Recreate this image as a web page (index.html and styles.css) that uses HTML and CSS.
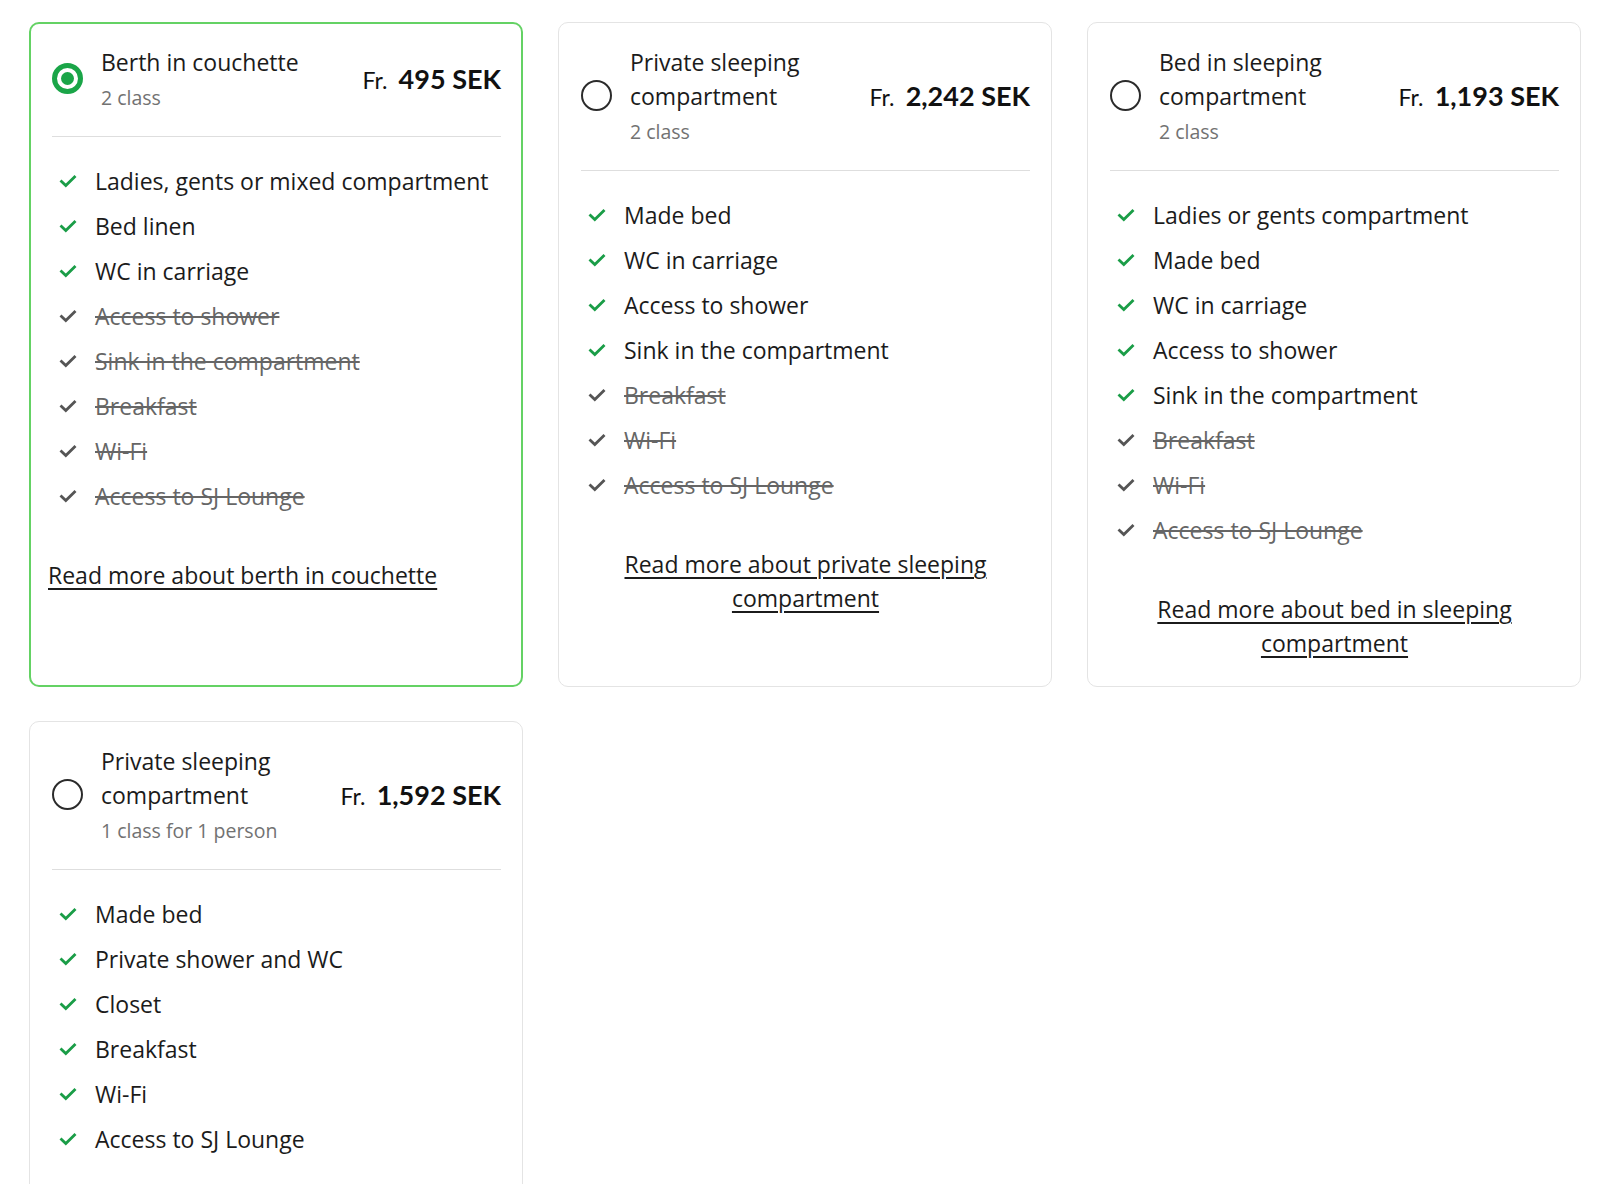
FILE: index.html
```html
<!DOCTYPE html>
<html lang="en">
<head>
<meta charset="utf-8">
<title>Sleeping options</title>
<link rel="stylesheet" href="styles.css">
</head>
<body>
<div class="options">

  <div class="card card--selected">
    <div class="card__head">
      <span class="radio radio--on"><span class="radio__dot"></span></span>
      <div class="card__title">
        <div class="title">Berth in couchette</div>
        <div class="sub">2 class</div>
      </div>
      <div class="price"><span class="price__from">Fr.</span> <span class="price__amount">495 SEK</span></div>
    </div>
    <ul class="features">
      <li class="feat"><svg class="check" viewBox="0 0 18 14"><path d="M1.5 6.5 L6.8 11.6 L16.5 2"/></svg><span>Ladies, gents or mixed compartment</span></li>
      <li class="feat"><svg class="check" viewBox="0 0 18 14"><path d="M1.5 6.5 L6.8 11.6 L16.5 2"/></svg><span>Bed linen</span></li>
      <li class="feat"><svg class="check" viewBox="0 0 18 14"><path d="M1.5 6.5 L6.8 11.6 L16.5 2"/></svg><span>WC in carriage</span></li>
      <li class="feat feat--off"><svg class="check" viewBox="0 0 18 14"><path d="M1.5 6.5 L6.8 11.6 L16.5 2"/></svg><span>Access to shower</span></li>
      <li class="feat feat--off"><svg class="check" viewBox="0 0 18 14"><path d="M1.5 6.5 L6.8 11.6 L16.5 2"/></svg><span>Sink in the compartment</span></li>
      <li class="feat feat--off"><svg class="check" viewBox="0 0 18 14"><path d="M1.5 6.5 L6.8 11.6 L16.5 2"/></svg><span>Breakfast</span></li>
      <li class="feat feat--off"><svg class="check" viewBox="0 0 18 14"><path d="M1.5 6.5 L6.8 11.6 L16.5 2"/></svg><span>Wi-Fi</span></li>
      <li class="feat feat--off"><svg class="check" viewBox="0 0 18 14"><path d="M1.5 6.5 L6.8 11.6 L16.5 2"/></svg><span>Access to SJ Lounge</span></li>
    </ul>
    <div class="more more--left"><a href="#">Read more about berth in couchette</a></div>
  </div>

  <div class="card">
    <div class="card__head">
      <span class="radio"></span>
      <div class="card__title">
        <div class="title">Private sleeping compartment</div>
        <div class="sub">2 class</div>
      </div>
      <div class="price"><span class="price__from">Fr.</span> <span class="price__amount">2,242 SEK</span></div>
    </div>
    <ul class="features">
      <li class="feat"><svg class="check" viewBox="0 0 18 14"><path d="M1.5 6.5 L6.8 11.6 L16.5 2"/></svg><span>Made bed</span></li>
      <li class="feat"><svg class="check" viewBox="0 0 18 14"><path d="M1.5 6.5 L6.8 11.6 L16.5 2"/></svg><span>WC in carriage</span></li>
      <li class="feat"><svg class="check" viewBox="0 0 18 14"><path d="M1.5 6.5 L6.8 11.6 L16.5 2"/></svg><span>Access to shower</span></li>
      <li class="feat"><svg class="check" viewBox="0 0 18 14"><path d="M1.5 6.5 L6.8 11.6 L16.5 2"/></svg><span>Sink in the compartment</span></li>
      <li class="feat feat--off"><svg class="check" viewBox="0 0 18 14"><path d="M1.5 6.5 L6.8 11.6 L16.5 2"/></svg><span>Breakfast</span></li>
      <li class="feat feat--off"><svg class="check" viewBox="0 0 18 14"><path d="M1.5 6.5 L6.8 11.6 L16.5 2"/></svg><span>Wi-Fi</span></li>
      <li class="feat feat--off"><svg class="check" viewBox="0 0 18 14"><path d="M1.5 6.5 L6.8 11.6 L16.5 2"/></svg><span>Access to SJ Lounge</span></li>
    </ul>
    <div class="more"><a href="#">Read more about private sleeping compartment</a></div>
  </div>

  <div class="card">
    <div class="card__head">
      <span class="radio"></span>
      <div class="card__title">
        <div class="title">Bed in sleeping compartment</div>
        <div class="sub">2 class</div>
      </div>
      <div class="price"><span class="price__from">Fr.</span> <span class="price__amount">1,193 SEK</span></div>
    </div>
    <ul class="features">
      <li class="feat"><svg class="check" viewBox="0 0 18 14"><path d="M1.5 6.5 L6.8 11.6 L16.5 2"/></svg><span>Ladies or gents compartment</span></li>
      <li class="feat"><svg class="check" viewBox="0 0 18 14"><path d="M1.5 6.5 L6.8 11.6 L16.5 2"/></svg><span>Made bed</span></li>
      <li class="feat"><svg class="check" viewBox="0 0 18 14"><path d="M1.5 6.5 L6.8 11.6 L16.5 2"/></svg><span>WC in carriage</span></li>
      <li class="feat"><svg class="check" viewBox="0 0 18 14"><path d="M1.5 6.5 L6.8 11.6 L16.5 2"/></svg><span>Access to shower</span></li>
      <li class="feat"><svg class="check" viewBox="0 0 18 14"><path d="M1.5 6.5 L6.8 11.6 L16.5 2"/></svg><span>Sink in the compartment</span></li>
      <li class="feat feat--off"><svg class="check" viewBox="0 0 18 14"><path d="M1.5 6.5 L6.8 11.6 L16.5 2"/></svg><span>Breakfast</span></li>
      <li class="feat feat--off"><svg class="check" viewBox="0 0 18 14"><path d="M1.5 6.5 L6.8 11.6 L16.5 2"/></svg><span>Wi-Fi</span></li>
      <li class="feat feat--off"><svg class="check" viewBox="0 0 18 14"><path d="M1.5 6.5 L6.8 11.6 L16.5 2"/></svg><span>Access to SJ Lounge</span></li>
    </ul>
    <div class="more"><a href="#">Read more about bed in sleeping compartment</a></div>
  </div>

  <div class="card">
    <div class="card__head">
      <span class="radio"></span>
      <div class="card__title">
        <div class="title">Private sleeping compartment</div>
        <div class="sub">1 class for 1 person</div>
      </div>
      <div class="price"><span class="price__from">Fr.</span> <span class="price__amount">1,592 SEK</span></div>
    </div>
    <ul class="features">
      <li class="feat"><svg class="check" viewBox="0 0 18 14"><path d="M1.5 6.5 L6.8 11.6 L16.5 2"/></svg><span>Made bed</span></li>
      <li class="feat"><svg class="check" viewBox="0 0 18 14"><path d="M1.5 6.5 L6.8 11.6 L16.5 2"/></svg><span>Private shower and WC</span></li>
      <li class="feat"><svg class="check" viewBox="0 0 18 14"><path d="M1.5 6.5 L6.8 11.6 L16.5 2"/></svg><span>Closet</span></li>
      <li class="feat"><svg class="check" viewBox="0 0 18 14"><path d="M1.5 6.5 L6.8 11.6 L16.5 2"/></svg><span>Breakfast</span></li>
      <li class="feat"><svg class="check" viewBox="0 0 18 14"><path d="M1.5 6.5 L6.8 11.6 L16.5 2"/></svg><span>Wi-Fi</span></li>
      <li class="feat"><svg class="check" viewBox="0 0 18 14"><path d="M1.5 6.5 L6.8 11.6 L16.5 2"/></svg><span>Access to SJ Lounge</span></li>
    </ul>
    <div class="more"><a href="#">Read more about private sleeping compartment</a></div>
  </div>

</div>
</body>
</html>
```

FILE: styles.css
```css
html, body {
  margin: 0;
  padding: 0;
  background: #ffffff;
}

body {
  font-family: "Open Sans", "Noto Sans", Arial, sans-serif;
  color: #1b1b1b;
}

.options {
  display: grid;
  grid-template-columns: repeat(3, 494px);
  column-gap: 35px;
  row-gap: 34px;
  padding: 22px 0 0 29px;
}

.card {
  border: 1px solid #e4e4e4;
  border-radius: 10px;
  padding: 22px 21px 26px 22px;
  background: #fff;
}

.card--selected {
  border: 2px solid #64d264;
  padding: 21px 20px 25px 21px;
}

.card__head {
  display: flex;
  align-items: center;
  padding-bottom: 24px;
  border-bottom: 1px solid #dedede;
}

.radio {
  flex: 0 0 auto;
  box-sizing: border-box;
  width: 31px;
  height: 31px;
  border: 2px solid #2b2b2b;
  border-radius: 50%;
  margin-right: 18px;
  display: flex;
  align-items: center;
  justify-content: center;
}

.radio--on {
  border: 5px solid #1aa548;
}

.radio__dot {
  width: 13px;
  height: 13px;
  border-radius: 50%;
  background: #1aa548;
}

.card__title {
  flex: 1 1 auto;
  min-width: 0;
  padding-right: 12px;
}

.title {
  font-size: 23px;
  line-height: 34px;
  color: #1b1b1b;
  max-width: 220px;
}

.sub {
  font-size: 19.5px;
  line-height: 28px;
  margin-top: 5px;
  color: #727272;
}

.price {
  flex: 0 0 auto;
  white-space: nowrap;
  color: #111;
  font-family: Lato, "Open Sans", Arial, sans-serif;
}

.price__from {
  font-size: 23px;
  margin-right: 7px;
}

.price__amount {
  font-size: 27px;
  font-weight: 700;
}

.features {
  list-style: none;
  margin: 21px 0 0;
  padding: 0;
}

.feat {
  display: flex;
  align-items: center;
  height: 45px;
  font-size: 23px;
  color: #1b1b1b;
}

.check {
  flex: 0 0 auto;
  width: 18px;
  height: 14px;
  margin-left: 7px;
  margin-right: 18px;
  fill: none;
  stroke: #1a9d47;
  stroke-width: 2.8;
  stroke-linejoin: miter;
}

.feat--off {
  color: #666;
}

.feat--off span {
  text-decoration: line-through;
  text-decoration-thickness: 1.5px;
}

.feat--off .check {
  stroke: #555;
}

.more {
  margin-top: 40px;
  text-align: center;
  font-size: 23px;
  line-height: 34px;
  padding: 0 30px;
}

.more--left {
  text-align: left;
  padding: 0;
  margin-left: -4px;
}

.more a {
  color: #1b1b1b;
  text-decoration: underline;
  text-underline-offset: 4px;
  text-decoration-thickness: 1.5px;
}
```
